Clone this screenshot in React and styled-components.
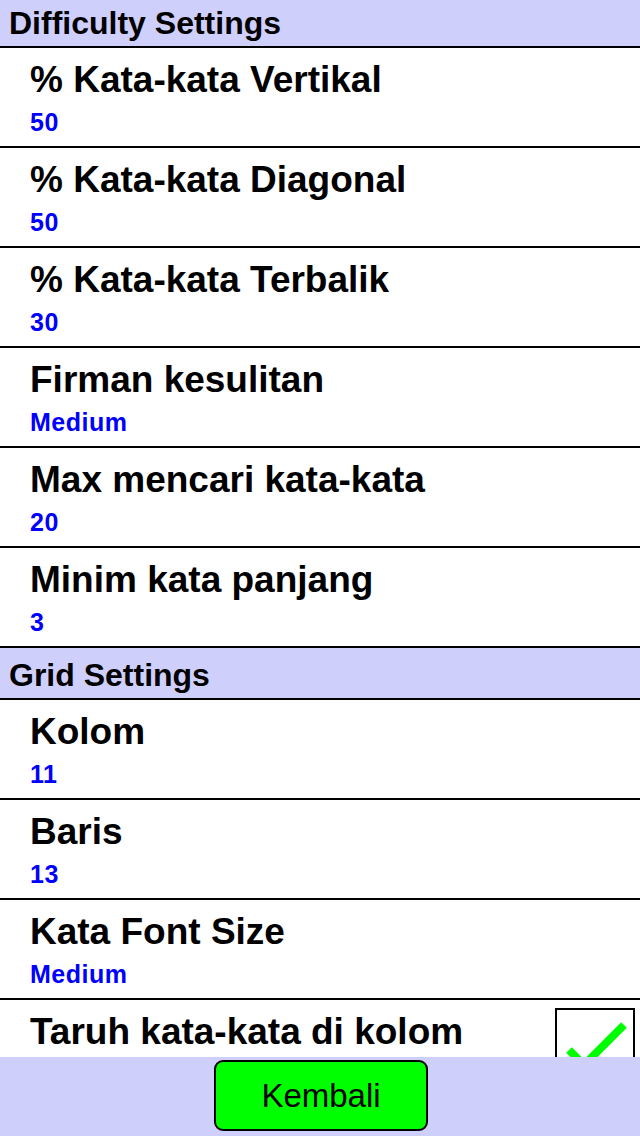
import React from 'react'
import styled, { createGlobalStyle } from 'styled-components';

const GlobalStyle = createGlobalStyle`
    html, body {
        margin: 0;
        padding: 0;
        background: #ffffff;
    }
    body {
        font-family: "Liberation Sans", Arial, Helvetica, sans-serif;
        overflow: hidden;
    }
`;

const sections = [
    {
        title: 'Difficulty Settings',
        rows: [
            { label: '% Kata-kata Vertikal', value: '50' },
            { label: '% Kata-kata Diagonal', value: '50' },
            { label: '% Kata-kata Terbalik', value: '30' },
            { label: 'Firman kesulitan', value: 'Medium' },
            { label: 'Max mencari kata-kata', value: '20' },
            { label: 'Minim kata panjang', value: '3' },
        ],
    },
    {
        title: 'Grid Settings',
        rows: [
            { label: 'Kolom', value: '11' },
            { label: 'Baris', value: '13' },
            { label: 'Kata Font Size', value: 'Medium' },
            { label: 'Taruh kata-kata di kolom', checked: true },
        ],
    },
];

const App = () => {
    return (
        <>
            <GlobalStyle />
            <Page>
                <ScrollArea>
                    <List>
                        {sections.map((section) => (
                            <React.Fragment key={section.title}>
                                <SectionHeader>{section.title}</SectionHeader>
                                {section.rows.map((row) => (
                                    <Row key={row.label}>
                                        <RowText>
                                            <RowLabel>{row.label}</RowLabel>
                                            {row.value && <RowValue>{row.value}</RowValue>}
                                        </RowText>
                                        {row.checked !== undefined &&
                                            <CheckBox>
                                                {row.checked &&
                                                    <svg width="76" height="76" viewBox="0 0 76 76">
                                                        <polyline points="12,40 27,55 67,15" fill="none" stroke="#00ff00" strokeWidth="8" strokeLinecap="butt" strokeLinejoin="miter" />
                                                    </svg>}
                                            </CheckBox>}
                                    </Row>
                                ))}
                            </React.Fragment>
                        ))}
                    </List>
                </ScrollArea>
                <BottomBar>
                    <BackButton type="button">Kembali</BackButton>
                </BottomBar>
            </Page>
        </>
    )
}

export default App;

const Page = styled.div`
    width: 640px;
    height: 1136px;
    display: flex;
    flex-direction: column;
    background: #ffffff;
`;

const ScrollArea = styled.div`
    flex: 1;
    overflow: hidden;
`;

const List = styled.div`
    display: flex;
    flex-direction: column;
    margin-top: -4px;
`;

const SectionHeader = styled.div`
    height: 52px;
    box-sizing: border-box;
    padding: 11px 9px 0;
    background: #cfcffc;
    border-bottom: 2px solid #000;
    font-size: 32px;
    line-height: 32px;
    font-weight: bold;
    color: #000;
    flex-shrink: 0;
`;

const Row = styled.div`
    height: 100px;
    box-sizing: border-box;
    display: flex;
    justify-content: space-between;
    align-items: flex-start;
    padding: 13px 5px 0 30px;
    border-bottom: 2px solid #000;
    flex-shrink: 0;
`;

const RowText = styled.div`
    display: flex;
    flex-direction: column;
    gap: 12px;
`;

const RowLabel = styled.div`
    font-size: 37px;
    line-height: 37px;
    font-weight: bold;
    color: #000;
`;

const RowValue = styled.div`
    font-size: 25px;
    line-height: 25px;
    font-weight: bold;
    color: #0000ff;
    letter-spacing: 0.5px;
`;

const CheckBox = styled.div`
    width: 80px;
    height: 80px;
    box-sizing: border-box;
    margin-top: -5px;
    border: 2px solid #000;
    background: #fff;
    flex-shrink: 0;

    > svg {
        display: block;
    }
`;

const BottomBar = styled.div`
    height: 79px;
    flex-shrink: 0;
    display: flex;
    justify-content: center;
    align-items: flex-start;
    padding-top: 3px;
    box-sizing: border-box;
    background: #cfcffc;
`;

const BackButton = styled.button`
    width: 214px;
    height: 71px;
    margin-left: 2px;
    background: #00ff00;
    border: 2px solid #000;
    border-radius: 9px;
    font-family: "Liberation Sans", Arial, sans-serif;
    font-size: 33px;
    color: #000;
    padding: 0;
    cursor: pointer;
`;
